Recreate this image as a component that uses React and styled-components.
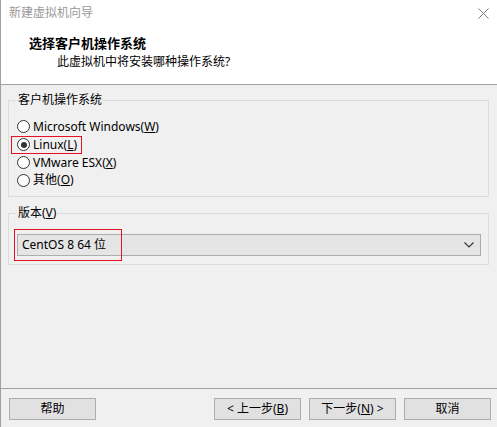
import * as React from "react";
import styled, {createGlobalStyle} from "styled-components";

const GlobalStyle = createGlobalStyle`
  html, body {
    margin: 0;
    padding: 0;
    background: #f0f0f0;
  }
  * {
    box-sizing: border-box;
  }
`;

const osList = [
  {label: "Microsoft Windows", key: "W"},
  {label: "Linux", key: "L", checked: true, marked: true},
  {label: "VMware ESX", key: "X"},
  {label: "其他", key: "O"},
];

const App = () => {
  return (
    <>
      <GlobalStyle/>
      <Wizard>
        <HeaderArea>
          <TitleBar>
            <WindowTitle>新建虚拟机向导</WindowTitle>
            <CloseIcon width="11" height="11" viewBox="0 0 11 11">
              <path d="M0.5 0.5 L10.5 10.5 M10.5 0.5 L0.5 10.5" stroke="#7a7a7a" strokeWidth="1"/>
            </CloseIcon>
          </TitleBar>
          <PageTitle>选择客户机操作系统</PageTitle>
          <PageSubtitle>此虚拟机中将安装哪种操作系统?</PageSubtitle>
        </HeaderArea>

        <Body>
          <GroupBox>
            <Legend>客户机操作系统</Legend>
            <RadioList>
              {osList.map((os) => (
                <RadioRow key={os.key} $marked={os.marked}>
                  <RadioCircle $checked={os.checked}/>
                  <span>{os.label}(<u>{os.key}</u>)</span>
                </RadioRow>
              ))}
            </RadioList>
          </GroupBox>

          <GroupBox $second>
            <Legend>版本(<u>V</u>)</Legend>
            <SelectWrap>
              <Select>
                <span>CentOS 8 64 位</span>
                <svg width="10" height="6" viewBox="0 0 10 6">
                  <path d="M0.5 0.5 L5 5 L9.5 0.5" fill="none" stroke="#333" strokeWidth="1.1"/>
                </svg>
              </Select>
              <Highlight/>
            </SelectWrap>
          </GroupBox>
        </Body>

        <Footer>
          <Button>帮助</Button>
          <Spacer/>
          <Button>&lt; 上一步(<u>B</u>)</Button>
          <Button>下一步(<u>N</u>) &gt;</Button>
          <Button>取消</Button>
        </Footer>
      </Wizard>
    </>
  )
}

const Wizard = styled.div`
  width: 497px;
  height: 427px;
  display: flex;
  flex-direction: column;
  background: #f0f0f0;
  border-left: 1px solid #a0a0a0;
  font-family: "Noto Sans", "Noto Sans CJK SC", sans-serif;
  font-size: 12px;
  color: #000;
  overflow: hidden;
`;

const HeaderArea = styled.div`
  background: #fff;
  height: 85px;
  border-bottom: 1px solid #a0a0a0;
  display: flex;
  flex-direction: column;
`;

const TitleBar = styled.div`
  height: 28px;
  display: flex;
  align-items: center;
  justify-content: space-between;
  padding: 0 8px 2px 8px;
`;

const WindowTitle = styled.span`
  color: #999;
  font-size: 12px;
  line-height: 16px;
`;

const CloseIcon = styled.svg`
  display: block;
`;

const PageTitle = styled.div`
  margin: 7px 0 0 28px;
  font-weight: 700;
  font-size: 13px;
  line-height: 17px;
`;

const PageSubtitle = styled.div`
  margin: 1px 0 0 56px;
  line-height: 17px;
`;

const Body = styled.div`
  flex: 1;
  padding: 7px 8px 0 7px;
  display: flex;
  flex-direction: column;
`;

const GroupBox = styled.fieldset`
  margin: ${props => props.$second ? "8px 0 0 0" : "0"};
  padding: ${props => props.$second ? "4px 8px 8px 2px" : "10px 0 7px 2px"};
  width: 481px;
  border: 1px solid #dcdcdc;
  min-width: 0;
`;

const Legend = styled.legend`
  padding: 0 1px;
  margin-left: 6px;
  line-height: 16px;
  font-size: 12px;
`;

const RadioList = styled.div`
  display: flex;
  flex-direction: column;
  align-items: flex-start;
`;

const RadioRow = styled.label`
  height: ${props => props.$marked ? "18px" : "17.7px"};
  display: inline-flex;
  align-items: center;
  gap: 3px;
  padding: 0 4px 0 5px;
  border: 1px solid ${props => props.$marked ? "#e81123" : "transparent"};
  line-height: 16px;
`;

const RadioCircle = styled.span`
  width: 13px;
  height: 13px;
  border-radius: 50%;
  border: 1px solid #333;
  background: #fff;
  position: relative;
  flex-shrink: 0;

  &::after {
    content: "";
    display: ${props => props.$checked ? "block" : "none"};
    position: absolute;
    left: 2.5px;
    top: 2.5px;
    width: 6px;
    height: 6px;
    border-radius: 50%;
    background: #333;
  }
`;

const SelectWrap = styled.div`
  position: relative;
  padding: 4px 0 0 0;
`;

const Select = styled.div`
  margin: 5px 0 0 6px;
  width: 464px;
  height: 22px;
  background: #e5e5e5;
  border: 1px solid #adadad;
  display: flex;
  align-items: center;
  justify-content: space-between;
  padding: 0 6px 0 4px;
  line-height: 16px;

  & svg {
    display: block;
  }
`;

const Highlight = styled.div`
  position: absolute;
  left: 3px;
  top: 4px;
  width: 108px;
  height: 32px;
  border: 1px solid #e81123;
  pointer-events: none;
`;

const Footer = styled.div`
  height: 39px;
  border-top: 1px solid #a0a0a0;
  display: flex;
  align-items: flex-start;
  padding: 9px 6px 0 8px;
  gap: 8px;
`;

const Spacer = styled.div`
  flex: 1;
`;

const Button = styled.div`
  width: 87px;
  height: 22px;
  background: #e1e1e1;
  border: 1px solid #adadad;
  display: flex;
  align-items: center;
  justify-content: center;
  line-height: 16px;
  font-size: 12px;
`;

export default App;
